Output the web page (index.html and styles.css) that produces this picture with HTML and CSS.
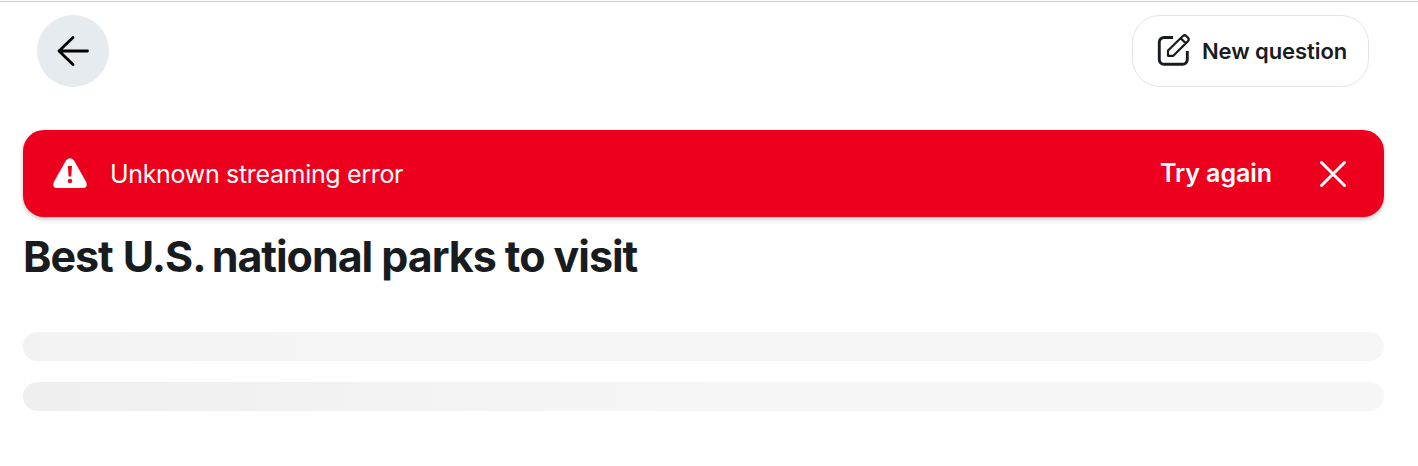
FILE: index.html
```html
<!DOCTYPE html>
<html lang="en">
<head>
<meta charset="utf-8">
<title>Best U.S. national parks to visit</title>
<link rel="stylesheet" href="styles.css">
</head>
<body>
<header class="topbar">
  <button class="back" aria-label="Back">
    <svg width="40" height="40" viewBox="0 0 40 40"><path d="M34.500 20H6M20 6.500 6 20l14 13.500"/></svg>
  </button>
  <button class="new-question">
    <svg width="36" height="36" viewBox="0 0 36 36"><path d="M17 4.500H8a4.700 4.700 0 0 0-4.700 4.700v17.400A4.700 4.700 0 0 0 8 31.300h18.600a4.700 4.700 0 0 0 4.700-4.700V18"/><path class="pencil" d="M12 17.500v5.300h5.300L32 8.100q1.500-1.700 0-3.400L30.300 3q-1.700-1.500-3.400 0zM24.700 5.200l5.200 5.200"/></svg>
    <span>New question</span>
  </button>
</header>
<main class="content">
  <div class="alert" role="alert">
    <svg class="warning" width="36" height="34" viewBox="0 0 36 34"><path d="M14 3.500Q18-1.200 22 3.500L34.200 25Q36 31 31 31H5Q0 31 1.800 25Z"/><path class="mark" d="M15.800 9h4.200l-.8 10.500h-2.600z"/><circle class="mark" cx="18" cy="24" r="2.200"/></svg>
    <span class="message">Unknown streaming error</span>
    <button class="retry">Try again</button>
    <button class="close" aria-label="Close"><svg width="28" height="28" viewBox="0 0 28 28"><path d="M2.500 2.500l23 23M25.500 2.500l-23 23"/></svg></button>
  </div>
  <h1 class="title">Best <span class="abbr">U.S.</span> national parks to visit</h1>
  <div class="skeleton"></div>
  <div class="skeleton second"></div>
</main>
</body>
</html>
```
FILE: styles.css
```css
* { box-sizing: border-box; }
html { background: #fff; }
body { margin: 0; padding-top: 1px; height: 466px; overflow: hidden; background: linear-gradient(#ccc, #ccc) 0 1px / 100% 1px no-repeat #fff; color: #181c1f; font-family: Inter, sans-serif; }
button { border: 0; padding: 0; margin: 0; font: inherit; color: inherit; background: none; }
svg { display: block; fill: none; stroke: currentColor; flex: none; stroke-linecap: round; stroke-linejoin: round; }
.topbar { display: flex; justify-content: space-between; padding: 14px 49px 0 37px; }
.back { display: flex; align-items: center; justify-content: center; width: 72px; height: 72px; border-radius: 50%; background: #e5ebee; color: #000; stroke-width: 2.800; }
.new-question { display: flex; align-items: center; width: 237px; height: 72px; padding-left: 23px; gap: 10px; border: 1px solid #e2e4e6; border-radius: 28px; font-size: 22px; font-weight: 600; letter-spacing: -0.08px; white-space: nowrap; stroke-width: 2.900; }
.new-question path { stroke-linecap: butt; }
.pencil { stroke-width: 2.200; }
.content { padding: 43px 34px 0 23px; }
.alert { display: flex; align-items: center; height: 87px; padding: 0 37px 0 29px; border-radius: 21px; background: #ed001d; color: #fff; box-shadow: 0 2px 4px rgba(0,0,0,.25); }
.warning { fill: #fff; stroke: none; }
.mark { fill: #ed001d; }
.message { flex: 1; margin-left: 22px; font-size: 25px; letter-spacing: -0.33px; }
.retry { margin-right: 47px; font-size: 25px; font-weight: 600; letter-spacing: -0.06px; padding-bottom: 1px; }
.close { stroke-width: 3; }
.title { margin: 12px 0 0; font-size: 43px; line-height: 54px; font-weight: 700; letter-spacing: -1.05px; white-space: nowrap; }
.abbr { margin: 0 -3px 0 1px; }
.skeleton { height: 29px; margin-top: 49px; border-radius: 15px; background: linear-gradient(90deg, #f2f2f2, #f6f6f6 28%); }
.second { margin-top: 21px; background: linear-gradient(90deg, #efefef, #f6f6f6 52%); }
```
